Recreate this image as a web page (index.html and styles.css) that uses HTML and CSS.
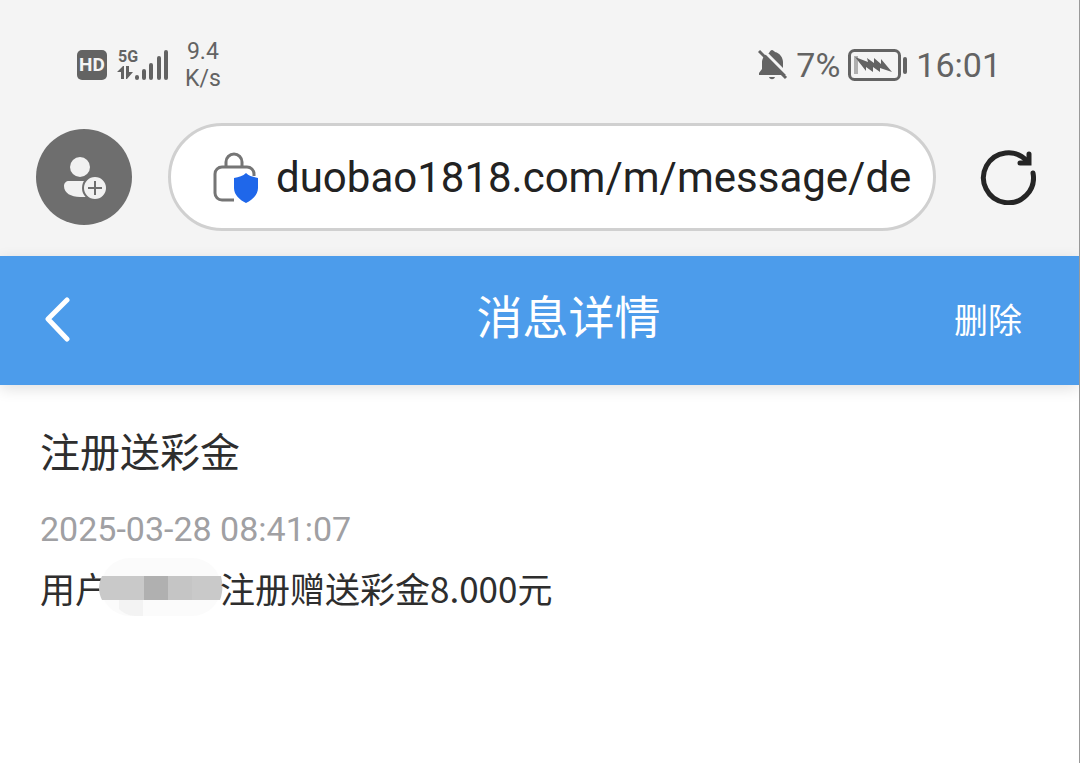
FILE: index.html
```html
<!DOCTYPE html>
<html lang="zh-CN">
<head>
  <meta charset="UTF-8" />
  <meta name="viewport" content="width=device-width, initial-scale=1.0"/>
  <title>消息详情</title>
  <link rel="stylesheet" href="styles.css">
</head>
<body>
  <!-- Status bar -->
  <div class="status-bar">
    <div class="status-left">
      <span class="hd">HD</span>
      <svg width="52" height="34" viewBox="0 0 52 34">
        <text class="signal-label" x="1" y="14">5G</text>
        <path d="M0 24l6-6h1v13H4v-7zM9 18h3v6h4l-6 7H9z" fill="#636363"/>
        <path d="M20 29v1M27 23v7M34 17v13M42 10v20M49 4v26" fill="none" stroke="#636363" stroke-width="4" stroke-linecap="round"/>
      </svg>
      <div class="speed">
        <span>9.4</span>
        <span>K/s</span>
      </div>
    </div>
    <div class="status-right">
      <svg width="30" height="32" viewBox="0 0 30 32">
        <path d="M14 1c1 0 2 1 3 2 5 1 8 6 8 10v7l3 4v2H1v-2l3-4v-7c0-4 3-8 7-9 1-2 2-3 3-3z" fill="#636363"/>
        <path d="M11 28h6c-1 3-5 3-6 0z" fill="#636363"/>
        <path d="M4 0l27 27" stroke="#f4f4f4" stroke-width="3"/>
        <path d="M1 2l27 27" stroke="#636363" stroke-width="3"/>
      </svg>
      <span>7%</span>
      <svg width="60" height="32" viewBox="0 0 60 32">
        <rect x="1.500" y="1.500" width="50" height="29" rx="5" fill="none" stroke="#636363" stroke-width="3"/>
        <path d="M8 7v18" stroke="#b0b0b0" stroke-width="4"/>
        <path d="M7 8l13 5-1-4 7 5v-5l7 6v-5l11 13-12-4v4l-7-5v5l-7-5v4z" fill="#636363"/>
        <rect x="55" y="8" width="4" height="17" rx="2" fill="#636363"/>
      </svg>
      <span>16:01</span>
    </div>
  </div>

  <!-- Browser bar -->
  <div class="browser-bar">
    <button type="button" class="avatar" aria-label="account">
      <svg width="96" height="96" viewBox="0 0 96 96">
        <circle cx="44" cy="38" r="10" fill="#f1f1f1"/>
        <path d="M33 52h23v16H44c-9 0-16-4-16-11 0-3 2-5 5-5z" fill="#f1f1f1"/>
        <circle cx="59" cy="59" r="12" fill="#f1f1f1" stroke="#6e6e6e" stroke-width="2"/>
        <path d="M59 52v14M52 59h14" stroke="#6e6e6e" stroke-width="2"/>
      </svg>
    </button>
    <div class="address">
      <svg width="46" height="52" viewBox="0 0 46 52">
        <path d="M13 15v-4a8 8 0 0 1 16 0v4" fill="none" stroke="#757575" stroke-width="3"/>
        <path d="M21 49H9a7 7 0 0 1-7-7V23a7 7 0 0 1 7-7h25a7 7 0 0 1 7 7v2" fill="none" stroke="#757575" stroke-width="3"/>
        <path d="M33 22c3 3 7 4 12 5v10c0 7-6 12-12 15-6-3-12-8-12-15V27c5-1 9-2 12-5z" fill="#1f67ea"/>
      </svg>
      <input type="text" class="url" aria-label="url" value="duobao1818.com/m/message/de" />
    </div>
    <button type="button" class="refresh" aria-label="refresh">
      <svg width="56" height="56" viewBox="0 0 56 56">
        <path d="M53 24A25 25 0 1 1 47 12" fill="none" stroke="#252525" stroke-width="5" stroke-linecap="round"/>
        <path d="M49 5v9H40" fill="none" stroke="#252525" stroke-width="5" stroke-linecap="round"/>
      </svg>
    </button>
  </div>

  <!-- Page header -->
  <div class="header">
    <button type="button" class="back" aria-label="back">
      <svg width="28" height="46" viewBox="0 0 28 46">
        <path d="M24 4L5 23l19 20" fill="none" stroke="#fff" stroke-width="5" stroke-linecap="round" stroke-linejoin="round"/>
      </svg>
    </button>
    <h1>消息详情</h1>
    <button type="button" class="delete">删除</button>
  </div>

  <!-- Message -->
  <div class="message">
    <h2>注册送彩金</h2>
    <div class="time">2025-03-28 08:41:07</div>
    <p>
      <span>用户</span>
      <svg class="mask" width="124" height="60" viewBox="0 0 124 60">
        <rect x="2" y="0" width="120" height="58" rx="29" fill="#fbfbfb"/>
        <path d="M20 42h24v16h-8c-6 0-12-3-16-7z" fill="#f3f3f3"/>
        <path d="M3 18h119c2 8 2 16-1 24H3c-4-8-4-16 0-24z" fill="#c9c9c9"/>
        <path d="M45 18h24v24H45z" fill="#b0b0b0"/>
        <path d="M69 18h24v24H69z" fill="#c5c5c5"/>
      </svg>
      <span>注册赠送彩金8.000元</span>
    </p>
  </div>
</body>
</html>
```

FILE: styles.css
```css
* {
  box-sizing: border-box;
}

body {
  margin: 0;
  min-height: 100vh;
  background: #fff;
  border-right: 1px solid #999;
  font-family: Roboto, "Noto Sans CJK SC", sans-serif;
  color: #2e2e2e;
}

button {
  padding: 0;
  border: none;
  background: none;
  font-family: inherit;
  cursor: pointer;
}

svg {
  display: block;
  flex-shrink: 0;
}

.status-bar {
  display: flex;
  justify-content: space-between;
  align-items: center;
  padding: 38px 78px 31px 77px;
  background: #f4f4f4;
  color: #636363;
}

.status-left,
.status-right {
  display: flex;
  align-items: center;
}

.status-left {
  gap: 10px;
}

.status-right {
  gap: 8px;
  font-size: 34px;
  line-height: 40px;
}

.hd {
  width: 30px;
  border-radius: 5px;
  background: #636363;
  color: #f4f4f4;
  font-size: 19px;
  font-weight: bold;
  line-height: 30px;
  text-align: center;
}

.signal-label {
  font-family: "Liberation Sans Narrow", Roboto, sans-serif;
  font-size: 16px;
  font-weight: bold;
  fill: #636363;
}

.speed {
  display: flex;
  flex-direction: column;
  align-items: center;
  margin-left: 6px;
  font-size: 23px;
  line-height: 27px;
}

.browser-bar {
  display: flex;
  align-items: center;
  padding: 0 43px 25px 36px;
  background: #f4f4f4;
}

.avatar {
  border-radius: 50%;
  background: #6e6e6e;
}

.address {
  display: flex;
  flex: 1;
  align-items: center;
  gap: 17px;
  height: 108px;
  min-width: 0;
  margin: 0 44px 0 36px;
  padding: 0 16px 0 42px;
  border: 3px solid #d0d0d0;
  border-radius: 54px;
  background: #fff;
}

.url {
  flex: 1;
  min-width: 0;
  padding: 0;
  border: none;
  outline: none;
  background: none;
  color: #222;
  font-family: Roboto, sans-serif;
  font-size: 42px;
}

.header {
  display: flex;
  align-items: center;
  height: 129px;
  padding: 0 57px 4px 43px;
  background: #4c9ceb;
  box-shadow: 0 4px 14px rgba(0,0,0,0.12);
  color: #fff;
}

.header h1 {
  flex: 1;
  margin: 0;
  font-size: 46px;
  font-weight: normal;
  line-height: 60px;
  padding-bottom: 2px;
  text-align: center;
}

.back {
  width: 140px;
}

.delete {
  color: #fff;
  font-size: 34px;
}

.message {
  padding: 39px 40px;
}

.message h2 {
  margin: 0;
  font-size: 40px;
  font-weight: normal;
  line-height: 60px;
}

.time {
  margin-top: 25px;
  color: #a0a0a3;
  font-size: 34px;
  line-height: 40px;
}

.message p {
  display: flex;
  align-items: center;
  margin: 9px 0 0;
  font-family: "Noto Sans CJK SC", sans-serif;
  font-size: 35px;
  line-height: 60px;
}

.mask {
  margin: 0 -3px 0 -11px;
}
```
